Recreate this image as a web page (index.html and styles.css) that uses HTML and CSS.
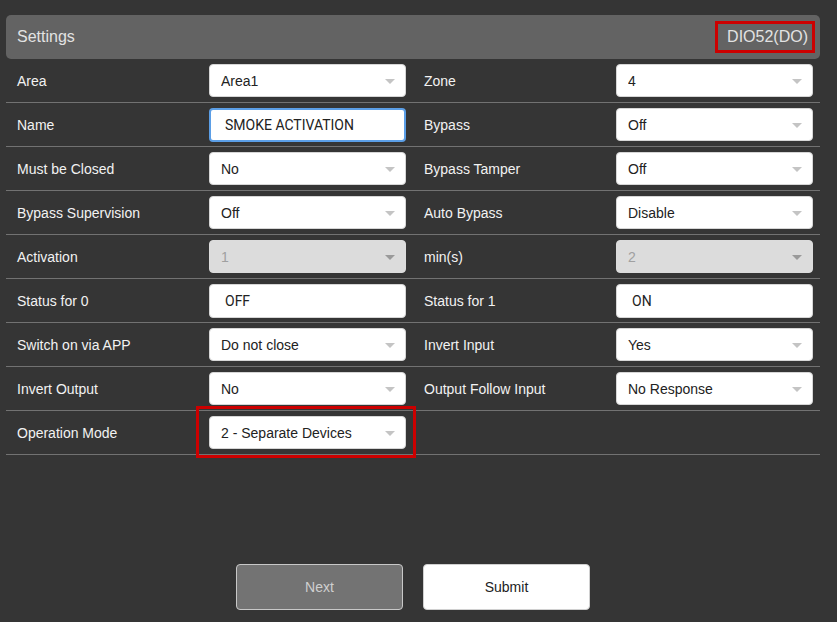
FILE: index.html
```html
<!DOCTYPE html>
<html lang="en">
<head>
    <meta charset="UTF-8">
    <meta name="viewport" content="width=device-width, initial-scale=1.0">
    <title>Settings</title>
    <link rel="stylesheet" href="styles.css">
</head>
<body>
    <div class="container">
        <div class="header">
            <div class="title">Settings</div>
            <div class="device">DIO52(DO)</div>
        </div>

        <div class="row">
            <div class="field">
                <div class="field-label">Area</div>
                <div class="select-wrap"><select><option>Area1</option></select></div>
            </div>
            <div class="field">
                <div class="field-label">Zone</div>
                <div class="select-wrap"><select><option>4</option></select></div>
            </div>
        </div>

        <div class="row">
            <div class="field">
                <div class="field-label">Name</div>
                <input class="text-input focused" type="text" value="SMOKE ACTIVATION">
            </div>
            <div class="field">
                <div class="field-label">Bypass</div>
                <div class="select-wrap"><select><option>Off</option></select></div>
            </div>
        </div>

        <div class="row">
            <div class="field">
                <div class="field-label">Must be Closed</div>
                <div class="select-wrap"><select><option>No</option></select></div>
            </div>
            <div class="field">
                <div class="field-label">Bypass Tamper</div>
                <div class="select-wrap"><select><option>Off</option></select></div>
            </div>
        </div>

        <div class="row">
            <div class="field">
                <div class="field-label">Bypass Supervision</div>
                <div class="select-wrap"><select><option>Off</option></select></div>
            </div>
            <div class="field">
                <div class="field-label">Auto Bypass</div>
                <div class="select-wrap"><select><option>Disable</option></select></div>
            </div>
        </div>

        <div class="row">
            <div class="field">
                <div class="field-label">Activation</div>
                <div class="select-wrap disabled"><select disabled><option>1</option></select></div>
            </div>
            <div class="field">
                <div class="field-label">min(s)</div>
                <div class="select-wrap disabled"><select disabled><option>2</option></select></div>
            </div>
        </div>

        <div class="row">
            <div class="field">
                <div class="field-label">Status for 0</div>
                <input class="text-input" type="text" value="OFF">
            </div>
            <div class="field">
                <div class="field-label">Status for 1</div>
                <input class="text-input" type="text" value="ON">
            </div>
        </div>

        <div class="row">
            <div class="field">
                <div class="field-label">Switch on via APP</div>
                <div class="select-wrap"><select><option>Do not close</option></select></div>
            </div>
            <div class="field">
                <div class="field-label">Invert Input</div>
                <div class="select-wrap"><select><option>Yes</option></select></div>
            </div>
        </div>

        <div class="row">
            <div class="field">
                <div class="field-label">Invert Output</div>
                <div class="select-wrap"><select><option>No</option></select></div>
            </div>
            <div class="field">
                <div class="field-label">Output Follow Input</div>
                <div class="select-wrap"><select><option>No Response</option></select></div>
            </div>
        </div>

        <div class="row">
            <div class="field">
                <div class="field-label">Operation Mode</div>
                <div class="select-wrap marked"><select><option>2 - Separate Devices</option></select></div>
            </div>
            <div class="field"></div>
        </div>

        <div class="actions">
            <button class="btn btn-next">Next</button>
            <button class="btn btn-submit">Submit</button>
        </div>
    </div>
</body>
</html>
```

FILE: styles.css
```css
body {
    margin: 0;
    background-color: #353535;
    font-family: "Liberation Sans", Arial, sans-serif;
}
.container {
    width: 814px;
    margin: 15px 0 0 6px;
}
.header {
    height: 44px;
    display: flex;
    align-items: center;
    justify-content: space-between;
    padding: 0 5px 0 11px;
    background-color: #636363;
    border-radius: 5px;
}
.title {
    font-size: 16px;
    color: #e2e2e2;
}
.device {
    height: 26px;
    line-height: 26px;
    padding: 0 4px 0 9px;
    border: 3px solid #cc0000;
    font-size: 16px;
    color: #e2e2e2;
}
.row {
    display: grid;
    grid-template-columns: 1fr 1fr;
    height: 43px;
    border-bottom: 1px solid #727272;
}
.field {
    display: flex;
    align-items: center;
    padding-left: 11px;
}
.field-label {
    width: 192px;
    font-size: 14px;
    color: #f2f2f2;
}
.select-wrap {
    position: relative;
    width: 197px;
    height: 33px;
}
.select-wrap select {
    width: 100%;
    height: 100%;
    padding: 0 0 0 11px;
    appearance: none;
    -webkit-appearance: none;
    background: #fff;
    border: 1px solid #d6d6d6;
    border-radius: 4px;
    font-family: "Liberation Sans", Arial, sans-serif;
    font-size: 14px;
    color: #222;
    outline: none;
    opacity: 1;
}
.select-wrap::after {
    content: "";
    position: absolute;
    right: 11px;
    top: 15px;
    border-left: 5px solid transparent;
    border-right: 5px solid transparent;
    border-top: 5px solid #c4c4c4;
}
.select-wrap.disabled select {
    background: #dcdcdc;
    border-color: #dcdcdc;
    color: #a0a0a0;
}
.select-wrap.disabled::after {
    border-top-color: #9a9a9a;
}
.select-wrap.marked::before {
    content: "";
    position: absolute;
    left: -13px;
    right: -10px;
    top: -10px;
    bottom: -9px;
    border: 3px solid #cc0000;
    pointer-events: none;
}
.text-input {
    box-sizing: border-box;
    width: 197px;
    height: 34px;
    padding: 0 0 0 15px;
    background: #fff;
    border: 1px solid #d6d6d6;
    border-radius: 4px;
    font-family: Roboto, "Liberation Sans", sans-serif;
    font-size: 14px;
    color: #222;
    outline: none;
}
.text-input.focused {
    border: 2px solid #5b9ee6;
    padding-left: 14px;
}
.actions {
    display: flex;
    justify-content: center;
    gap: 20px;
    margin-top: 109px;
}
.btn {
    width: 167px;
    height: 46px;
    border-radius: 4px;
    font-family: "Liberation Sans", Arial, sans-serif;
    font-size: 14px;
    cursor: pointer;
}
.btn-next {
    background-color: #737373;
    border: 1px solid #c8c8c8;
    color: #cfcfcf;
}
.btn-submit {
    background-color: #fff;
    border: 1px solid #d0d0d0;
    color: #222;
}
```
